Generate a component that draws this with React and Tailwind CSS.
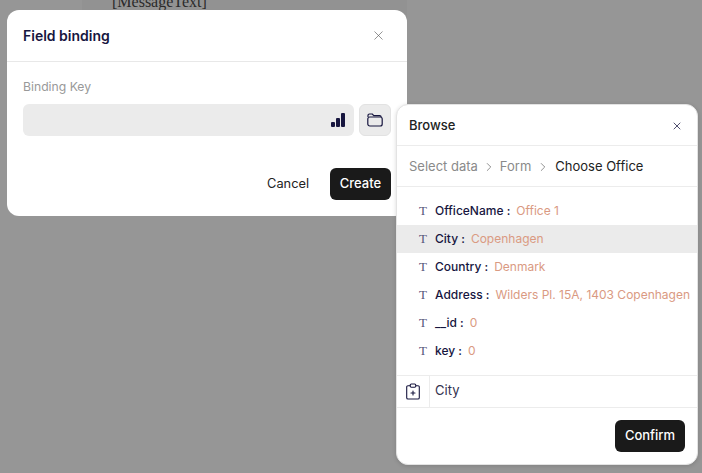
import React from "react";
import { X, ChevronRight } from "lucide-react";

const fields = [
  { name: "OfficeName", value: "Office 1" },
  { name: "City", value: "Copenhagen", active: true },
  { name: "Country", value: "Denmark" },
  { name: "Address", value: "Wilders Pl. 15A, 1403 Copenhagen" },
  { name: "__id", value: "0" },
  { name: "key", value: "0" },
];

const App = () => {
  return (
    <div className="relative w-[702px] h-[473px] overflow-hidden bg-[#969696] font-['Inter',sans-serif]">
      {/* page behind the overlay */}
      <div className="absolute left-[82px] top-0 w-[325px] h-[20px] bg-[#929292]">
        <p className="pl-[30px] -mt-[8px] text-[16px] leading-[20px] text-[#2a2a2a] font-['Liberation_Serif',serif]">
          [MessageText]
        </p>
      </div>

      {/* Field binding dialog */}
      <div className="absolute left-[7px] top-[10px] w-[400px] h-[206px] bg-white rounded-[12px] flex flex-col">
        <div className="h-[52px] flex items-center justify-between pl-[16px] pr-[21px] border-b border-[#e8e8e8]">
          <span className="text-[14px] font-semibold text-[#17163f]">Field binding</span>
          <X size={15} strokeWidth={1} className="text-[#555]" />
        </div>
        <div className="px-[16px] pt-[17px]">
          <div className="text-[12.2px] leading-[16px] text-[#999]">Binding Key</div>
          <div className="flex gap-[5px] mt-[9px]">
            <div className="flex-1 h-[32px] bg-[#ebebeb] rounded-[6px] flex items-center justify-end pr-[9px]">
              <svg width="14" height="14" viewBox="0 0 14 14" className="text-[#17163f]" fill="currentColor">
                <rect x="0" y="9" width="4" height="5" rx="1" />
                <rect x="5" y="5" width="4" height="9" rx="1" />
                <rect x="10" y="0" width="4" height="14" rx="1" />
              </svg>
            </div>
            <button className="w-[32px] h-[32px] bg-[#ebebeb] border border-[#e2e2e2] rounded-[6px] flex items-center justify-center">
              <svg width="16" height="14" viewBox="0 0 16 14" fill="none" stroke="#17163f" strokeWidth="1.2" strokeLinejoin="round">
                <path d="M1 4V2.5C1 1.6 1.6 1 2.5 1H5.2L6.8 2.6H12.6C13.5 2.6 14.1 3.2 14.1 4.1" />
                <rect x="0.8" y="4" width="14.4" height="9" rx="2" />
              </svg>
            </button>
          </div>
        </div>
        <div className="mt-auto pb-[16px] pr-[16px] flex items-center justify-end gap-[13px]">
          <button className="px-[8px] text-[12.8px] text-[#222]">Cancel</button>
          <button className="w-[61px] h-[32px] rounded-[6px] bg-[#1a1a1a] text-white text-[13px] font-medium">Create</button>
        </div>
      </div>

      {/* Browse panel */}
      <div className="absolute left-[396px] top-[104px] w-[302px] h-[361px] bg-white rounded-[12px] border border-[#e3e3e3] shadow-[0_1px_4px_rgba(0,0,0,0.15)] flex flex-col">
        <div className="h-[41px] pt-[1px] flex items-center justify-between pl-[12px] pr-[14px] border-b border-[#ececec] shrink-0">
          <span className="text-[13px] font-medium text-[#222]">Browse</span>
          <X size={12} strokeWidth={1.5} className="text-[#17163f]" />
        </div>
        <div className="h-[41px] pt-[2px] flex items-center pl-[12px] border-b border-[#ececec] text-[13px] shrink-0">
          <span className="text-[#8a8a8a]">Select data</span>
          <ChevronRight size={14} strokeWidth={1.1} className="mx-[4px] text-[#555]" />
          <span className="text-[#8a8a8a]">Form</span>
          <ChevronRight size={14} strokeWidth={1.1} className="mx-[5px] text-[#555]" />
          <span className="text-[#222]">Choose Office</span>
        </div>
        <div className="pt-[10px] h-[188px] shrink-0">
          {fields.map((f) => (
            <div
              key={f.name}
              className={`h-[28px] flex items-center pl-[22px] text-[12px] whitespace-nowrap ${f.active ? "bg-[#ebebeb]" : ""}`}
            >
              <span className="w-[16px] text-[13px] text-[#55557a] font-['Liberation_Serif',serif]">T</span>
              <span className="text-[#17163f] font-medium">{f.name} :</span>
              <span className="ml-[6px] text-[#da9a82]">{f.value}</span>
            </div>
          ))}
        </div>
        <div className="h-[33px] flex items-stretch border-y border-[#ececec] shrink-0">
          <div className="w-[33px] flex items-center justify-center border-r border-[#ececec]">
            <svg width="14" height="17" viewBox="0 0 14 17" fill="none" stroke="#17163f" strokeWidth="1.1" strokeLinecap="round" strokeLinejoin="round">
              <path d="M4 2.8H2C1.2 2.8 .7 3.3 .7 4.1V14.7C.7 15.5 1.2 16 2 16H12C12.8 16 13.3 15.5 13.3 14.7V4.1C13.3 3.3 12.8 2.8 12 2.8H10" />
              <rect x="4.2" y="1" width="5.6" height="3.2" rx="1.2" />
              <path d="M7 8V12M5 10H9" />
            </svg>
          </div>
          <div className="flex items-center pl-[5px] pb-[1px] text-[13px] text-[#33324f]">City</div>
        </div>
        <div className="flex-1 flex items-center justify-end pr-[12px] pb-[1px]">
          <button className="w-[70px] h-[32px] rounded-[6px] bg-[#1a1a1a] text-white text-[13px] font-medium">Confirm</button>
        </div>
      </div>
    </div>
  );
};

export default App;
